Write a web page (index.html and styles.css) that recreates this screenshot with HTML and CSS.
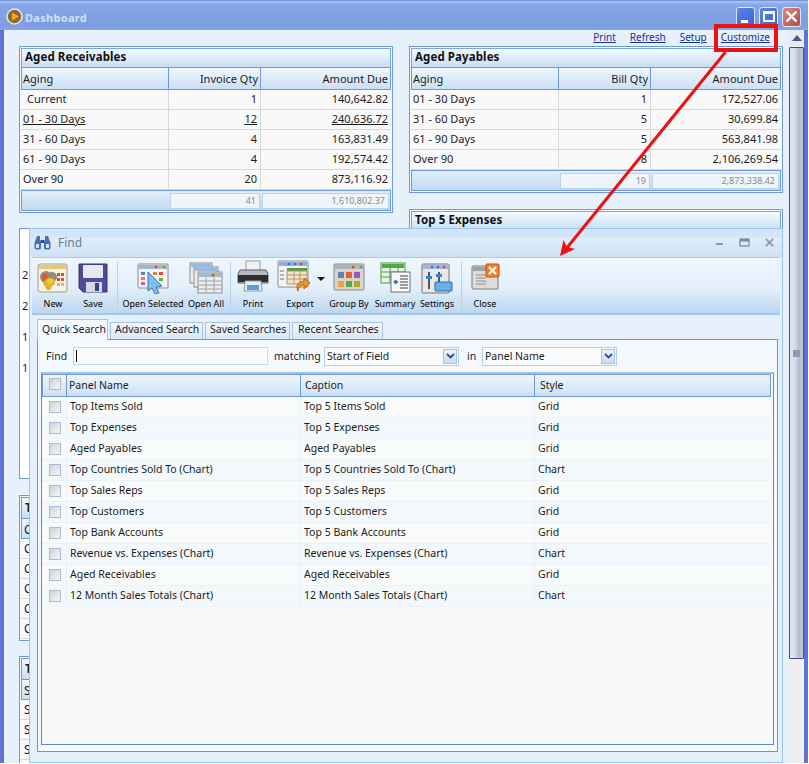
FILE: index.html
```html
<!DOCTYPE html>
<html lang="en">
<head>
<meta charset="utf-8">
<title>Dashboard</title>
<link rel="stylesheet" href="styles.css">
</head>
<body>
<div class="app">
  <header class="titlebar">
    <svg class="app-icon" width="17" height="17" viewBox="0 0 17 17"><circle cx="8.5" cy="8.5" r="7.5" fill="#8a6a3a" stroke="#e8e4d8" stroke-width="1.6"/><path d="M6 4.5 13 8.5 6 12.5z" fill="#f5a81c"/></svg>
    <span class="title-text">Dashboard</span>
    <div class="win-buttons">
      <span class="win-btn"><span class="glyph-min"></span></span>
      <span class="win-btn"><span class="glyph-max"></span></span>
      <span class="win-btn win-close"><svg width="13" height="13" viewBox="0 0 13 13"><path d="M1.5 1.5 11.5 11.5M11.5 1.5 1.5 11.5" stroke="#fff" stroke-width="2.4"/></svg></span>
    </div>
  </header>
  <div class="body-row">
    <main class="content">
      <nav class="links">
        <a>Print</a><a>Refresh</a><a>Setup</a><a>Customize</a>
      </nav>
      <div class="columns">
        <div class="col">
          <section class="panel receivables">
            <h2 class="panel-title">Aged Receivables</h2>
            <div class="t-row t-head"><span>Aging</span><span class="r">Invoice Qty</span><span class="r">Amount Due</span></div>
            <div class="t-row"><span class="ind">Current</span><span class="r">1</span><span class="r">140,642.82</span></div>
            <div class="t-row t-link"><span>01 - 30 Days</span><span class="r">12</span><span class="r">240,636.72</span></div>
            <div class="t-row"><span>31 - 60 Days</span><span class="r">4</span><span class="r">163,831.49</span></div>
            <div class="t-row"><span>61 - 90 Days</span><span class="r">4</span><span class="r">192,574.42</span></div>
            <div class="t-row"><span>Over 90</span><span class="r">20</span><span class="r">873,116.92</span></div>
            <div class="t-foot"><span></span><span class="sum">41</span><span class="sum">1,610,802.37</span></div>
          </section>
          <section class="panel chart-stub">
            <span>2</span><span>2</span><span>1</span><span>1</span>
          </section>
          <section class="panel stub stub-a">
            <div class="stub-title">T</div>
            <div class="stub-head">C</div>
            <div class="stub-row">C</div><div class="stub-row">C</div><div class="stub-row">C</div><div class="stub-row">C</div><div class="stub-row">C</div>
          </section>
          <section class="panel stub stub-b">
            <div class="stub-title">T</div>
            <div class="stub-head">S</div>
            <div class="stub-row">S</div><div class="stub-row">S</div><div class="stub-row">S</div>
          </section>
        </div>
        <div class="col col-right">
          <section class="panel payables">
            <h2 class="panel-title">Aged Payables</h2>
            <div class="t-row t-head"><span>Aging</span><span class="r">Bill Qty</span><span class="r">Amount Due</span></div>
            <div class="t-row"><span>01 - 30 Days</span><span class="r">1</span><span class="r">172,527.06</span></div>
            <div class="t-row"><span>31 - 60 Days</span><span class="r">5</span><span class="r">30,699.84</span></div>
            <div class="t-row"><span>61 - 90 Days</span><span class="r">5</span><span class="r">563,841.98</span></div>
            <div class="t-row"><span>Over 90</span><span class="r">8</span><span class="r">2,106,269.54</span></div>
            <div class="t-foot"><span></span><span class="sum">19</span><span class="sum">2,873,338.42</span></div>
          </section>
          <section class="panel expenses">
            <h2 class="panel-title">Top 5 Expenses</h2>
          </section>
        </div>
      </div>
    </main>
    <div class="scrollbar">
      <div class="sb-up"><svg width="10" height="6" viewBox="0 0 10 6"><path d="M5 0 10 6H0z" fill="#4a5a80"/></svg></div>
      <div class="sb-thumb"><span class="sb-grip"></span></div>
    </div>
  </div>
</div>

<section class="find">
  <div class="find-title">
    <svg width="17" height="15" viewBox="0 0 17 15"><path d="M3 1h3v5l1 1v6a1.500 1.500 0 0 1-1.500 1.500h-3A2 2 0 0 1 .500 12.500V8z" fill="#4a70b8"/><path d="M11 1h3l2.500 7v4.500a2 2 0 0 1-2 2h-3A1.500 1.500 0 0 1 10 13V7l1-1z" fill="#4a70b8"/><rect x="6.500" y="5" width="4" height="3" fill="#2c4c90"/><rect x="2" y="9" width="3" height="4" fill="#cfe0f5"/><rect x="12" y="9" width="3" height="4" fill="#cfe0f5"/></svg>
    <span class="find-caption">Find</span>
    <div class="find-ctrls">
      <svg width="9" height="9" viewBox="0 0 9 9"><rect x="1" y="5" width="7" height="2" fill="#8c99a8"/></svg>
      <svg width="11" height="9" viewBox="0 0 11 9"><rect x="1" y="1" width="9" height="7" fill="none" stroke="#7c8998" stroke-width="1.200"/><rect x="1" y="1" width="9" height="2.500" fill="#7c8998"/></svg>
      <svg width="9" height="9" viewBox="0 0 9 9"><path d="M.8.8 8.200 8.200M8.200.8.8 8.200" stroke="#8c99a8" stroke-width="1.800"/></svg>
    </div>
  </div>
  <div class="toolbar">
    <div class="tool w-new">
      <svg class="ico" width="32" height="32" viewBox="0 0 32 32"><rect x="1" y="2" width="29" height="28" rx="2" fill="#f7f2e4" stroke="#a89a80"/><rect x="2" y="3" width="27" height="4" fill="#e8c878"/><g fill="#d85030"><rect x="20" y="11" width="3" height="3"/><rect x="24" y="11" width="3" height="3"/><rect x="20" y="16" width="3" height="3"/><rect x="24" y="16" width="3" height="3"/><rect x="20" y="21" width="3" height="3" fill="#c8b8a0"/><rect x="24" y="21" width="3" height="3" fill="#c8b8a0"/></g><circle cx="9" cy="15" r="6" fill="#8c8c8c"/><circle cx="9" cy="15" r="3.500" fill="#e05828"/><circle cx="15" cy="15" r="5" fill="#9c8c70"/><path d="M9 17h8l1 5-3 2 -2 4h-3l-2-4-2-2z" fill="#e8b020"/><circle cx="13" cy="19" r="3" fill="#f0c830"/></svg>
      <span>New</span>
    </div>
    <div class="tool w-new">
      <svg class="ico" width="30" height="32" viewBox="0 0 30 32"><path d="M1 2H29V30H5L1 26z" fill="#4c4c98" stroke="#34346c"/><rect x="5" y="3" width="20" height="13" rx="1" fill="#e8e8f2"/><rect x="8" y="20" width="16" height="10" fill="#d8d8e4"/><rect x="17" y="21" width="4" height="8" fill="#34448c"/></svg>
      <span>Save</span>
    </div>
    <span class="sep sep-a"></span>
    <div class="tool w-opensel">
      <svg class="ico" width="32" height="32" viewBox="0 0 32 32"><rect x="1" y="2" width="30" height="24" rx="1" fill="#f4f4f4" stroke="#8c8c90"/><rect x="2" y="3" width="28" height="4" fill="#9cb8dc"/><circle cx="19" cy="5" r="1.300" fill="#e04030"/><circle cx="23" cy="5" r="1.300" fill="#e8c020"/><circle cx="27" cy="5" r="1.300" fill="#60b040"/><rect x="4" y="10" width="4" height="3" fill="#6080b0"/><rect x="4" y="15" width="4" height="3" fill="#f08030"/><rect x="4" y="20" width="4" height="3" fill="#b060c0"/><rect x="16" y="10" width="4" height="3" fill="#f08030"/><rect x="22" y="10" width="4" height="3" fill="#e05040"/><rect x="22" y="16" width="4" height="3" fill="#60b040"/><path d="M11 10 25 24 19 25 22 31 18 32 15 26 11 29z" fill="#7cc0f0" stroke="#3c74b4"/></svg>
      <span>Open Selected</span>
    </div>
    <div class="tool w-openall">
      <svg class="ico" width="34" height="32" viewBox="0 0 34 32"><g stroke="#8c8c90" fill="#eee"><rect x="1" y="1" width="22" height="20"/><rect x="5" y="5" width="24" height="20"/><rect x="9" y="10" width="24" height="21"/></g><rect x="2" y="2" width="20" height="3" fill="#9cb8dc"/><rect x="6" y="6" width="22" height="3" fill="#9cb8dc"/><rect x="10" y="11" width="22" height="4" fill="#9cb8dc"/><circle cx="24" cy="13" r="1.200" fill="#e04030"/><circle cx="28" cy="13" r="1.200" fill="#e8c020"/><path d="M10 19H32M10 23H32M10 27H32M17 15V31M25 15V31" stroke="#a0a0a8"/></svg>
      <span>Open All</span>
    </div>
    <span class="sep sep-b"></span>
    <div class="tool w-print">
      <svg class="ico ico-high" width="32" height="32" viewBox="0 0 32 32"><rect x="9" y="1" width="14" height="10" fill="#f2f2f2" stroke="#9a9a9a"/><path d="M3 10H29L31 14V23H1V14z" fill="#b8bcc0" stroke="#5c6064"/><rect x="1" y="15" width="30" height="7" fill="#2c2e34"/><path d="M8 21H24L25 31H7z" fill="#e4eef8" stroke="#9a9a9a"/><rect x="10" y="25" width="12" height="5" fill="#58a0d8"/></svg>
      <span>Print</span>
    </div>
    <div class="tool w-export">
      <svg class="ico ico-high ico-export" width="33" height="32" viewBox="0 0 33 32"><rect x="1" y="1" width="30" height="26" rx="1" fill="#f4f4f4" stroke="#8c8c90"/><rect x="2" y="2" width="28" height="4" fill="#8cb0dc"/><circle cx="12" cy="4" r="1.300" fill="#4070c0"/><circle cx="18" cy="4" r="1.300" fill="#4070c0"/><circle cx="24" cy="4" r="1.300" fill="#e04030"/><rect x="10" y="8" width="20" height="3" fill="#50a040"/><path d="M10 11H30V24H10z" fill="#f0e8c8" stroke="#a09870"/><path d="M10 15H30M10 19H30M17 11V24M23 11V24" stroke="#c09070"/><path d="M3 11H7M3 15H7M3 19H7" stroke="#707070"/><path d="M21 31C18 25 22 21 27 21V18L33 23 27 29V25C24 25 22 27 21 31z" fill="#f09020" stroke="#b05810" stroke-width=".8"/></svg>
      <span>Export</span>
    </div>
    <span class="caret"></span>
    <div class="tool w-group">
      <svg class="ico ico-low" width="32" height="28" viewBox="0 0 32 28"><rect x="1" y="1" width="30" height="26" rx="1" fill="#d8d4cc" stroke="#8c8c90"/><rect x="2" y="2" width="28" height="4" fill="#a8b4c4"/><circle cx="20" cy="4" r="1.300" fill="#e04030"/><circle cx="24" cy="4" r="1.300" fill="#e8c020"/><circle cx="28" cy="4" r="1.300" fill="#60b040"/><rect x="5" y="9" width="6" height="6" fill="#6880b8"/><rect x="13" y="9" width="6" height="6" fill="#e86030"/><rect x="21" y="9" width="6" height="6" fill="#9858c0"/><rect x="5" y="18" width="6" height="6" fill="#f0a040"/><rect x="13" y="18" width="6" height="6" fill="#58a850"/><rect x="21" y="18" width="6" height="6" fill="#b0a828"/></svg>
      <span>Group By</span>
    </div>
    <div class="tool w-summary">
      <svg class="ico" width="31" height="31" viewBox="0 0 31 31"><rect x="1" y="1" width="24" height="20" fill="#e8f4e4" stroke="#4c9c48"/><rect x="2" y="2" width="22" height="4" fill="#4cab48"/><path d="M1 10H25M1 15H25M10 6V21M18 6V21" stroke="#4c9c48"/><rect x="11" y="10" width="19" height="20" fill="#f8f8f8" stroke="#707070"/><path d="M20 14H28M20 17H28M20 20H28M20 23H28M20 26H28" stroke="#404040"/><path d="M13 20H17M15 18 18 20 15 22z" fill="#2c70c0" stroke="#2c70c0"/></svg>
      <span>Summary</span>
    </div>
    <div class="tool w-settings">
      <svg class="ico ico-low" width="32" height="31" viewBox="0 0 32 31"><rect x="1" y="1" width="27" height="29" rx="1" fill="#e8e8e8" stroke="#707478"/><rect x="2" y="2" width="25" height="4" fill="#9cb8dc"/><circle cx="11" cy="4" r="1.300" fill="#4070c0"/><circle cx="17" cy="4" r="1.300" fill="#4070c0"/><circle cx="23" cy="4" r="1.300" fill="#e04030"/><path d="M8 9V26M18 9V26" stroke="#555" stroke-width="2"/><rect x="5" y="13" width="6" height="3" fill="#3c80c8"/><rect x="15" y="11" width="6" height="3" fill="#3c80c8"/><rect x="14" y="19" width="17" height="9" rx="1" fill="#6cb0e8" stroke="#2c68a8"/></svg>
      <span>Settings</span>
    </div>
    <span class="sep sep-c"></span>
    <div class="tool w-close">
      <svg class="ico ico-low" width="29" height="27" viewBox="0 0 29 27"><rect x="1" y="3" width="26" height="23" rx="1" fill="#dedcd8" stroke="#7c7c7c"/><rect x="2" y="4" width="24" height="4" fill="#a0a4a8"/><path d="M5 12H15M5 15H15M5 18H15M5 21H15" stroke="#909090"/><rect x="15" y="1" width="13" height="13" rx="1" fill="#f08030" stroke="#c05018"/><path d="M18 4 25 11M25 4 18 11" stroke="#fff" stroke-width="2.200"/></svg>
      <span>Close</span>
    </div>
  </div>
  <div class="tabs">
    <span class="tab tab-on">Quick Search</span>
    <span class="tab tab-adv">Advanced Search</span>
    <span class="tab tab-saved">Saved Searches</span>
    <span class="tab tab-recent">Recent Searches</span>
  </div>
  <div class="tab-panel">
    <div class="filter">
      <label class="f-find">Find</label>
      <span class="input"><span class="cursor"></span></span>
      <label class="f-match">matching</label>
      <span class="select s-a">Start of Field<span class="sel-btn"><svg width="9" height="6" viewBox="0 0 9 6"><path d="M1 1 4.500 4.500 8 1" fill="none" stroke="#2c4a90" stroke-width="1.800"/></svg></span></span>
      <label class="f-in">in</label>
      <span class="select s-b">Panel Name<span class="sel-btn"><svg width="9" height="6" viewBox="0 0 9 6"><path d="M1 1 4.500 4.500 8 1" fill="none" stroke="#2c4a90" stroke-width="1.800"/></svg></span></span>
    </div>
    <div class="grid">
      <div class="g-row g-head"><span class="g-chk"><i class="cb"></i></span><span>Panel Name</span><span>Caption</span><span>Style</span></div>
      <div class="g-row"><span class="g-chk"><i class="cb"></i></span><span>Top Items Sold</span><span>Top 5 Items Sold</span><span>Grid</span></div>
      <div class="g-row"><span class="g-chk"><i class="cb"></i></span><span>Top Expenses</span><span>Top 5 Expenses</span><span>Grid</span></div>
      <div class="g-row"><span class="g-chk"><i class="cb"></i></span><span>Aged Payables</span><span>Aged Payables</span><span>Grid</span></div>
      <div class="g-row"><span class="g-chk"><i class="cb"></i></span><span>Top Countries Sold To (Chart)</span><span>Top 5 Countries Sold To (Chart)</span><span>Chart</span></div>
      <div class="g-row"><span class="g-chk"><i class="cb"></i></span><span>Top Sales Reps</span><span>Top 5 Sales Reps</span><span>Grid</span></div>
      <div class="g-row"><span class="g-chk"><i class="cb"></i></span><span>Top Customers</span><span>Top 5 Customers</span><span>Grid</span></div>
      <div class="g-row"><span class="g-chk"><i class="cb"></i></span><span>Top Bank Accounts</span><span>Top 5 Bank Accounts</span><span>Grid</span></div>
      <div class="g-row"><span class="g-chk"><i class="cb"></i></span><span>Revenue vs. Expenses (Chart)</span><span>Revenue vs. Expenses (Chart)</span><span>Chart</span></div>
      <div class="g-row"><span class="g-chk"><i class="cb"></i></span><span>Aged Receivables</span><span>Aged Receivables</span><span>Grid</span></div>
      <div class="g-row"><span class="g-chk"><i class="cb"></i></span><span>12 Month Sales Totals (Chart)</span><span>12 Month Sales Totals (Chart)</span><span>Chart</span></div>
    </div>
  </div>
</section>

<div class="callout-box"></div>
<svg class="callout-arrow" width="809" height="764" viewBox="0 0 809 764"><path d="M725.500 52 566 249" stroke="#ee1111" stroke-width="3" fill="none"/><path d="M560 256 563.500 240 567 247 575 249z" fill="#ee1111"/></svg>
</body>
</html>
```
FILE: styles.css
```css
* { box-sizing: border-box; }
html, body { margin: 0; padding: 0; }
body {
  width: 809px;
  height: 764px;
  overflow: hidden;
  position: relative;
  background: #fff;
  font-family: "Noto Sans", "DejaVu Sans", sans-serif;
  font-size: 11px;
  color: #1c1c1c;
}
.app {
  width: 808px;
  height: 763px;
  display: flex;
  flex-direction: column;
  background: #6272d2;
  padding: 0 4px 0 4px;
  overflow: hidden;
}
.titlebar {
  flex: 0 0 30px;
  margin: 0 -4px;
  padding: 2px 7px 0 6px;
  display: flex;
  align-items: center;
  gap: 2px;
  background: linear-gradient(#a9c2f0 0, #86a6e8 4px, #7d9de2 24px, #88a8e6 30px);
  border-top: 1px solid #7a94da;
}
.title-text {
  color: #cfe0f7;
  font-weight: 700;
  font-size: 11px;
  letter-spacing: .3px;
  margin-top: 1px;
}
.win-buttons { margin-left: auto; display: flex; gap: 4px; }
.win-btn {
  width: 19px;
  height: 20px;
  border-radius: 3px;
  border: 1px solid #dfe8fa;
  background: linear-gradient(135deg, #5d84e8, #3c60d4);
  display: flex;
  align-items: center;
  justify-content: center;
  position: relative;
}
.win-close { background: linear-gradient(135deg, #d98a80, #b34a48); }
.glyph-min { width: 7px; height: 3px; background: #fff; margin-top: 10px; margin-right: 3px; }
.glyph-max { width: 12px; height: 11px; border: 2px solid #fff; border-top-width: 3px; }
.body-row { flex: 1; display: flex; min-height: 0; }
.content {
  flex: 0 0 784px;
  padding: 0 0 0 15px;
  background: #e6f1fb;
  overflow: hidden;
}
.links {
  height: 16px;
  display: flex;
  justify-content: flex-end;
  gap: 14px;
  padding-right: 18px;
  line-height: 14px;
  font-size: 10px;
}
.links a { color: #1a2f9c; text-decoration: underline; }
.columns { display: grid; grid-template-columns: 374px 374px; column-gap: 16px; }
.col { display: flex; flex-direction: column; gap: 15px; }
.col-right { gap: 16px; }
.panel {
  border: 1px solid #6d9ad6;
  padding: 1px;
  background: #f9f9f9;
}
.panel-title {
  margin: 0;
  height: 19px;
  padding: 0 3px;
  line-height: 16px;
  font-size: 11.5px;
  letter-spacing: .1px;
  font-weight: 700;
  border: 1px solid #7aa7e0;
  border-bottom: 0;
  background: linear-gradient(#f4f9fe, #c8def5);
  color: #111;
}
.t-row {
  display: grid;
  grid-template-columns: 148px 92px 130px;
  height: 20px;
  line-height: 18px;
  border-bottom: 1px solid #d8d8d8;
}
.t-row > span { padding: 0 3px 0 2px; border-right: 1px solid #d8d8d8; }
.t-row > span:last-child { border-right: 0; }
.t-row > .ind { padding-left: 6px; }
.t-row > .r { text-align: right; }
.t-link > span { text-decoration: underline; }
.t-row.t-head {
  grid-template-columns: 147px 92px 129px;
  height: 23px;
  line-height: 22px;
  border: 1px solid #6d9ad6;
  background: linear-gradient(#f0f6fd, #cbe0f6);
}
.t-head > span { border-right: 1px solid #6d9ad6; padding: 0 2px 0 1px; }
.t-foot {
  display: grid;
  grid-template-columns: 147px 92px 129px;
  height: 21px;
  border: 1px solid #6d9ad6;
  background: linear-gradient(#e3eefa, #c2d9f2);
  padding: 2px 0 1px;
}
.sum {
  margin: 0 1px;
  border: 1px solid #b9d2ee;
  background: #f0f5fa;
  color: #8a8a8a;
  font-size: 9px;
  text-align: right;
  padding: 0 3px;
  line-height: 14px;
}
.receivables { height: 167px; }
.payables { height: 147px; }
.expenses { height: 200px; }
.chart-stub {
  height: 251px;
  background: #fff;
  padding: 38px 0 0 2px;
  display: flex;
  flex-direction: column;
  gap: 15px;
  line-height: 16px;
}
.stub { font-size: 12px; }
.stub-a { height: 146px; margin-top: 1px; }
.stub-b { height: 140px; }
.stub-title { height: 21px; line-height: 20px; border: 1px solid #6d9ad6; border-bottom: 0; background: linear-gradient(#f4f9fe, #c8def5); padding-left: 3px; font-weight: 700; }
.stub-head { height: 21px; line-height: 21px; padding-left: 2px; border: 1px solid #6d9ad6; background: linear-gradient(#f0f6fd, #cbe0f6); }
.stub-row { height: 20px; line-height: 20px; padding-left: 3px; border-bottom: 1px solid #d8d8d8; }
.scrollbar {
  flex: 0 0 16px;
  background: #efefef;
  display: flex;
  flex-direction: column;
  border-left: 1px solid #e6f1fb;
}
.sb-up {
  height: 16px;
  background: #e4ecf5;
  display: flex;
  align-items: center;
  justify-content: center;
}
.sb-thumb {
  height: 612px;
  margin-top: 1px;
  border: 1px solid #3f4f88;
  border-radius: 1px;
  background: linear-gradient(90deg, #e3e8ee, #d4dce6 40%, #adbdd0 70%, #c4ced9);
  display: flex;
  align-items: center;
  justify-content: center;
}
.sb-grip { width: 7px; height: 7px; background: #8d9ab5; }

/* Find window */
.find {
  position: absolute;
  left: 29px;
  top: 228px;
  width: 754px;
  height: 535px;
  display: flex;
  flex-direction: column;
  background: #e5f0fa;
  border: 1px solid #9dc6ee;
}
.find-title {
  flex: 0 0 28px;
  display: flex;
  align-items: center;
  padding: 0 8px 2px 4px;
  gap: 7px;
  background: linear-gradient(#d3e5f8 0, #d3e5f8 8px, #e0edfa 9px, #cde1f6 28px);
}
.find-caption { color: #6e7e8e; font-size: 12px; }
.find-ctrls { margin-left: auto; display: flex; align-items: center; gap: 15px; }
.toolbar {
  flex: 0 0 58px;
  margin-left: 2px;
  margin-right: 2px;
  display: flex;
  align-items: flex-start;
  background: linear-gradient(#eff6fd, #e3effa 55%, #bcd7f1);
  border-top: 1px solid #a9cbed;
  border-bottom: 2px solid #a5c6e8;
  padding-left: 1px;
}
.tool {
  display: flex;
  flex-direction: column;
  align-items: center;
  height: 55px;
  padding-top: 4px;
  font-size: 9px;
  color: #000;
  white-space: nowrap;
}
.tool .ico { flex: 0 0 auto; margin-bottom: auto; }
.tool .ico-high { margin-top: -2px; }
.tool .ico-low { margin-top: 1px; }
.tool .ico-export { margin-right: 14px; }
.tool span { line-height: 12px; margin-bottom: 3px; }
.w-new { width: 40px; }
.w-opensel { width: 68px; }
.w-openall { width: 38px; }
.w-print { width: 44px; }
.w-export { width: 50px; }
.w-group { width: 48px; }
.w-summary { width: 44px; }
.w-settings { width: 40px; }
.w-close { width: 46px; }
.sep { width: 1px; height: 48px; margin-top: 4px; background: #b5d2ee; }
.sep-a { margin-left: 4px; margin-right: 1px; }
.sep-b { margin-left: 5px; }
.sep-c { margin-left: 4px; }
.caret {
  width: 0;
  height: 0;
  margin: 19px 0 0 -8px;
  border: 4px solid transparent;
  border-top: 4px solid #111;
  border-bottom: 0;
}
.tabs {
  flex: 0 0 24px;
  display: flex;
  align-items: flex-end;
  gap: 2px;
  padding-left: 7px;
  font-size: 10.5px;
}
.tab {
  height: 17px;
  line-height: 13px;
  padding-left: 4px;
  border: 1px solid #a6c4e6;
  border-bottom: 0;
  background: linear-gradient(#f2f7fc, #d8e8f8);
  color: #222;
}
.tab-on { width: 71px; height: 21px; line-height: 18px; background: #f4f9fd; margin-bottom: -1px; position: relative; z-index: 1; }
.tab-adv { width: 93px; }
.tab-saved { width: 85px; }
.tab-recent { width: 91px; padding-left: 5px; }
.tab-panel {
  flex: 0 0 auto;
  height: 413px;
  margin: 0 4px 0 7px;
  border: 1px solid #6d96c8;
  background: #f4f9fd;
  padding: 0 3px 6px 3px;
  display: flex;
  flex-direction: column;
  font-size: 10.5px;
}
.filter { height: 32px; display: flex; align-items: center; flex: 0 0 32px; padding-left: 5px; }
.f-find { width: 27px; }
.input { width: 195px; height: 18px; background: #f9fbfd; border: 1px solid #c5d9ee; padding: 2px; }
.cursor { display: block; width: 1px; height: 12px; background: #111; }
.f-match { margin-left: 6px; width: 50px; }
.select {
  height: 19px;
  line-height: 16px;
  background: #f9fbfd;
  border: 1px solid #b6cfea;
  padding-left: 2px;
  display: flex;
  justify-content: space-between;
  align-items: center;
}
.s-a { width: 135px; }
.s-b { width: 135px; }
.f-in { margin-left: 8px; width: 15px; }
.sel-btn {
  width: 14px;
  height: 15px;
  margin-right: 1px;
  background: linear-gradient(#eef4fb, #c9dcf2);
  border: 1px solid #a8c4e4;
  display: flex;
  align-items: center;
  justify-content: center;
}
.grid {
  flex: 1;
  border: 1px solid #5e8ac2;
  border-top: 2px solid #a4c2e4;
  background: #f9f9f9;
  padding-right: 1px;
}
.g-row {
  display: grid;
  grid-template-columns: 25px 234px 234px 1fr;
  height: 21px;
  line-height: 19px;
  border-bottom: 1px solid #e9f1fa;
}
.g-row:nth-child(even) { background: #f9fafa; }
.g-row:nth-child(odd) { background: #f2f8fb; }
.g-row > span { padding-left: 3px; border-right: 1px solid #e9f1fa; }
.g-row > .g-chk { padding: 4px 0 0 7px; }
.cb {
  display: block;
  width: 12px;
  height: 12px;
  border: 1px solid #a8bcd8;
  background: linear-gradient(135deg, #d2d2d2, #f6f6f6);
}
.g-row.g-head {
  grid-template-columns: 24px 234px 234px 1fr;
  height: 23px;
  line-height: 20px;
  border: 1px solid #6d9ad6;
  background: linear-gradient(#f0f6fd, #cbe0f6);
  margin-right: 1px;
}
.g-row.g-head > span { border-right: 1px solid #6d9ad6; padding-left: 2px; }
.g-row.g-head > span:nth-child(3) { padding-left: 4px; }
.g-row.g-head > span:last-child { border-right: 0; padding-left: 5px; }
.g-row.g-head > .g-chk { padding: 3px 0 0 6px; }

.callout-box {
  position: absolute;
  left: 714px;
  top: 24px;
  width: 64px;
  height: 28px;
  border: 4px solid #ee1111;
}
.callout-arrow { position: absolute; left: 0; top: 0; pointer-events: none; }
```
